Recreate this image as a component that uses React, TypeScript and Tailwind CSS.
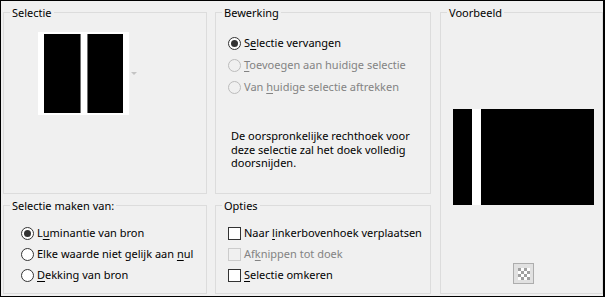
import React from 'react';

const Group: React.FC<{ title: string; className?: string; children?: React.ReactNode }> = ({ title, className = '', children }) => (
  <fieldset className={`border border-[#dcdcdc] min-w-0 ${className}`}>
    <legend className="ml-[6px] px-[2px] h-[15px] leading-[15px] text-black">{title}</legend>
    {children}
  </fieldset>
);

const Radio: React.FC<{ checked?: boolean; disabled?: boolean }> = ({ checked, disabled }) => (
  <span
    className={`w-[13px] h-[13px] rounded-full border flex items-center justify-center shrink-0 ${
      disabled ? 'border-[#bcbcbc] bg-[#f0f0f0]' : 'border-[#333333] bg-white'
    }`}
  >
    {checked && <span className="w-[7px] h-[7px] rounded-full bg-[#333333]" />}
  </span>
);

const Check: React.FC<{ disabled?: boolean }> = ({ disabled }) => (
  <span
    className={`w-[13px] h-[13px] border shrink-0 ${disabled ? 'border-[#cccccc] bg-[#f0f0f0]' : 'border-[#333333] bg-white'}`}
  />
);

// label with one underlined accelerator letter
const Label: React.FC<{ pre: string; key_: string; post: string; disabled?: boolean }> = ({ pre, key_, post, disabled }) => (
  <span className={`whitespace-nowrap ${disabled ? 'text-[#838383]' : 'text-black'}`}>
    {pre}
    <span className="underline underline-offset-2">{key_}</span>
    {post}
  </span>
);

const Checker = () => {
  const cells = [];
  for (let r = 0; r < 4; r++) {
    for (let c = 0; c < 4; c++) {
      cells.push(<span key={`${r}-${c}`} className={(r + c) % 2 === 0 ? 'bg-[#a0a0a0]' : 'bg-white'} />);
    }
  }
  return <div className="grid grid-cols-4 grid-rows-4 w-[12px] h-[12px]">{cells}</div>;
};

export default function App() {
  return (
    <div className="w-[605px] h-[297px] bg-[#f0f0f0] border-t border-l border-b border-r-2 border-black pl-[2px] pt-[4px] flex gap-[8px] text-[11px] font-['Noto_Sans',sans-serif] overflow-hidden">
      {/* left column */}
      <div className="w-[204px] flex flex-col gap-[4px]">
        <Group title="Selectie" className="h-[189px]">
          <div className="flex items-center gap-[2px] ml-[34px] mt-[12px]">
            <div className="w-[91px] h-[83px] bg-white flex justify-between px-[6px] py-[2px]">
              <div className="w-[37px] bg-black border-r border-[#707070]" />
              <div className="w-[36px] bg-black border-l border-[#707070]" />
            </div>
            <span className="w-0 h-0 border-l-[3px] border-r-[3px] border-t-[3px] border-l-transparent border-r-transparent border-t-[#c4c4c4]" />
          </div>
        </Group>
        <Group title="Selectie maken van:" className="h-[96px]">
          <div className="flex flex-col pl-[17px] pt-[10px]">
            <label className="flex items-center gap-[3px] h-[21px]">
              <Radio checked />
              <Label pre="L" key_="u" post="minantie van bron" />
            </label>
            <label className="flex items-center gap-[3px] h-[21px]">
              <Radio />
              <Label pre="Elke waarde niet gelijk aan " key_="n" post="ul" />
            </label>
            <label className="flex items-center gap-[3px] h-[21px]">
              <Radio />
              <Label pre="" key_="D" post="ekking van bron" />
            </label>
          </div>
        </Group>
      </div>

      {/* middle column */}
      <div className="w-[216px] flex flex-col gap-[4px]">
        <Group title="Bewerking" className="h-[189px]">
          <div className="flex flex-col pl-[12px] pt-[12px]">
            <label className="flex items-center gap-[3px] h-[22px]">
              <Radio checked />
              <Label pre="S" key_="e" post="lectie vervangen" />
            </label>
            <label className="flex items-center gap-[3px] h-[22px]">
              <Radio disabled />
              <Label pre="" key_="T" post="oevoegen aan huidige selectie" disabled />
            </label>
            <label className="flex items-center gap-[3px] h-[22px]">
              <Radio disabled />
              <Label pre="Van " key_="h" post="uidige selectie aftrekken" disabled />
            </label>
            <p className="mt-[31px] pl-[3px] leading-[13.5px] text-black">
              De oorspronkelijke rechthoek voor
              <br />
              deze selectie zal het doek volledig
              <br />
              doorsnijden.
            </p>
          </div>
        </Group>
        <Group title="Opties" className="h-[96px]">
          <div className="flex flex-col pl-[12px] pt-[10px]">
            <label className="flex items-center gap-[3px] h-[21px]">
              <Check />
              <Label pre="Naar " key_="l" post="inkerbovenhoek verplaatsen" />
            </label>
            <label className="flex items-center gap-[3px] h-[21px]">
              <Check disabled />
              <Label pre="Af" key_="k" post="nippen tot doek" disabled />
            </label>
            <label className="flex items-center gap-[3px] h-[21px]">
              <Check />
              <Label pre="" key_="S" post="electie omkeren" />
            </label>
          </div>
        </Group>
      </div>

      {/* right column */}
      <div className="w-[163px] ml-[1px]">
        <Group title="Voorbeeld" className="h-[289px]">
          <div className="flex flex-col">
            <div className="ml-[12px] mt-[89px] w-[141px] h-[96px] bg-black flex">
              <div className="ml-[19px] w-[9px] bg-white" />
            </div>
            <button className="ml-[72px] mt-[58px] w-[21px] h-[21px] border border-[#adadad] bg-[#e1e1e1] flex items-center justify-center">
              <Checker />
            </button>
          </div>
        </Group>
      </div>
    </div>
  );
}
